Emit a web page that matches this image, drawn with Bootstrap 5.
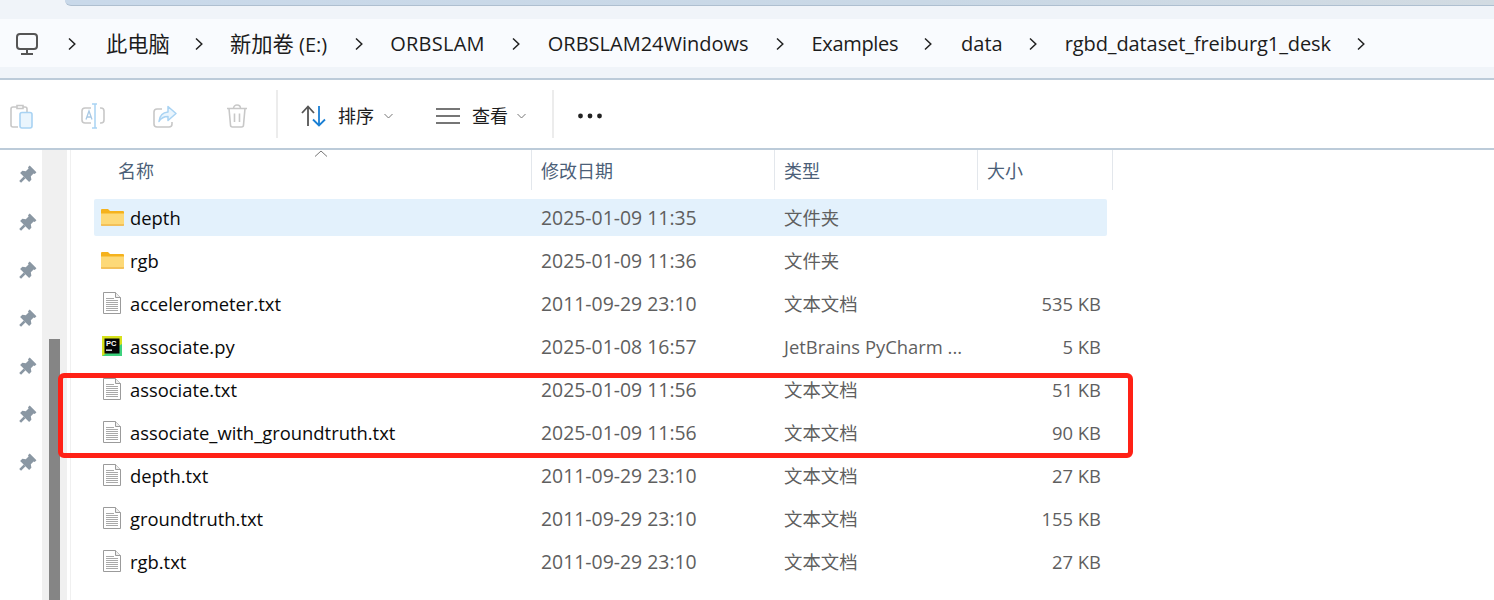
<!doctype html>
<html lang="zh-CN"><head><meta charset="utf-8"><title>rgbd_dataset_freiburg1_desk</title>
<link href="https://cdn.jsdelivr.net/npm/bootstrap@5.3.0/dist/css/bootstrap.min.css" rel="stylesheet">
<style>
html,body{height:600px;overflow:hidden;background:#fff}
body{font-family:"Open Sans","Noto Sans CJK SC",sans-serif;color:#1a1a1a;width:1494px}
.top-band{height:19px;background:#f0f4f9}
.top-strip{height:6px;margin-left:65px;background:linear-gradient(90deg,#c9d9ea,#c9d8e6 60%,#d2dbe2);border-bottom:1px solid #aebfd0;border-bottom-left-radius:6px}
.addr{height:48px;background:#f9fbfe;font-size:20px;color:#1c1c1c;padding-top:2px}
.addr-after{height:11px;background:#f0f4f9}
.rule{height:2px;background:#bccbd9}
.pc-ico{margin-left:15px;width:24px;height:24px}
.seg{white-space:nowrap}
.cjk-big{font-size:21.3px}
.chev{width:8px;height:14px;flex:none}
.tight{letter-spacing:-.35px}.wide{letter-spacing:.25px}.tight-sm{letter-spacing:-.1px}
.l9{margin-left:9px}.l10{margin-left:10px}.l12{margin-left:12px}.l23{margin-left:23px}.l25{margin-left:25px}.l26{margin-left:26px}.l27{margin-left:27px}.l28{margin-left:28px}.l29{margin-left:29px}.l30{margin-left:30px}.l43{margin-left:43px}.l48{margin-left:48px}.l49{margin-left:49px}
.tools{height:68px;padding-top:4px}
.tb-ico{flex:none;display:block}
.tb-sep{width:2px;height:48px;background:#ececec;flex:none;margin-top:-4px}
.tb-lbl{font-size:18px;color:#1c1c1c;white-space:nowrap}
.body-wrap{height:450px}
.pins{width:42px;padding-top:15px;gap:38px;flex:none}
.pin{width:18px;height:18px;margin-left:19px;margin-bottom:-8px}
.sb-track{width:25px;background:#f0f0f0;padding-left:7px;padding-top:189px;flex:none}
.sb-thumb{width:11px;height:261px;background:#858585}
.gut{width:4px;border-right:1px solid #f0f0f0;flex:none}
.files{padding-left:23px;width:1040px}
.hdr{height:40px;font-size:18px;color:#4c5f78;margin-right:-5px}
.hcell{padding-left:9px;height:40px;display:flex;align-items:center;border-right:1px solid #e3e7ec;flex:none;padding-top:2px}
.w1{width:438px;padding-left:24px}.w2{width:243px}.w3{width:203px}.w4{width:135px}
.caret-up{top:0;left:220px;width:14px;height:7px}
.rows{padding-top:9px;gap:6px}
.frow{height:37px;font-size:18.4px;border-radius:2px;white-space:nowrap;width:1013px}
.frow.sel{background:#e3f1fc}
.c1{width:437px;color:#0a0a0a;flex:none}
.ic-folder{margin-left:7px;margin-right:6px;flex:none}
.ic-doc{margin-left:9px;margin-right:9px;flex:none}
.ic-pc{margin-left:8px;margin-right:8px;flex:none}
.c2{width:243px;padding-left:10px;color:#5f5f5f;flex:none;font-size:19.4px}
.c3{width:203px;padding-left:10px;color:#5f5f5f;flex:none}
.c4{width:124px;text-align:right;color:#5f5f5f;flex:none}
.red-box{left:58px;top:373px;width:1075px;height:85px;border:5px solid #ff2116;border-radius:6px;pointer-events:none}
</style></head>
<body class="position-relative">
<svg width="0" height="0" class="position-absolute"><defs>
<symbol id="pin" viewBox="0 0 16 16"><path d="M9.500.500 15.500 6.500 14 8 13 7.500 10.500 10 11 13 9 15 1 7 3 5 6 5.500 8.500 3 8 2Z" fill="#8a97a3"/><path d="M5 11 1 15" stroke="#8a97a3" stroke-width="2.400"/></symbol>
<symbol id="chv" viewBox="0 0 8 14"><path d="M1 1.500 6.800 7 1 12.500" fill="none" stroke="#222" stroke-width="1.500"/></symbol>
<symbol id="folder" viewBox="0 0 23 18"><path d="M0 2a1 1 0 0 1 1-1h6l2 2h13a1 1 0 0 1 1 1v12.500a1 1 0 0 1-1 1H1a1 1 0 0 1-1-1Z" fill="#f5b21d"/><path d="M0 5.500h23v11a1 1 0 0 1-1 1H1a1 1 0 0 1-1-1Z" fill="#fdd978"/><path d="M0 16.500h23v1H0Z" fill="#eaa936"/></symbol>
<symbol id="doc" viewBox="0 0 18 22"><path d="M.5.500h12l5 5v16H.5Z" fill="#fff" stroke="#9b9b9b"/><path d="M12.500.500v5h5" fill="#eee" stroke="#9b9b9b"/><path d="M3 6.500h8M3 8.500h12M3 10.500h12M3 12.500h12M3 14.500h12M3 16.500h12M3 18.500h12" stroke="#a9a9a9"/></symbol>
</defs></svg>

<div class="top-band"><div class="top-strip"></div></div>
<div class="addr d-flex align-items-center">
  <svg class="pc-ico" viewBox="0 0 24 24" fill="none" stroke="#555" stroke-width="2"><rect x="2" y="2" width="20" height="15" rx="3"/><path d="M12 17v4M6 22h12" /></svg>
  <svg class="chev l29"><use href="#chv"/></svg>
  <span class="seg cjk-big l30">此电脑</span>
  <svg class="chev l25"><use href="#chv"/></svg>
  <span class="seg l27"><span class="cjk-big">新加卷</span> (E:)</span>
  <svg class="chev l28"><use href="#chv"/></svg>
  <span class="seg wide l27">ORBSLAM</span>
  <svg class="chev l27"><use href="#chv"/></svg>
  <span class="seg l28">ORBSLAM24Windows</span>
  <svg class="chev l27"><use href="#chv"/></svg>
  <span class="seg tight l28">Examples</span>
  <svg class="chev l26"><use href="#chv"/></svg>
  <span class="seg l29">data</span>
  <svg class="chev l26"><use href="#chv"/></svg>
  <span class="seg tight-sm l28">rgbd_dataset_freiburg1_desk</span>
  <svg class="chev l26"><use href="#chv"/></svg>
</div>
<div class="addr-after"></div>
<div class="rule"></div>

<div class="tools d-flex align-items-center">
  <svg class="tb-ico l10" width="23" height="25" viewBox="0 0 23 25" fill="none"><path d="M7 3H3a2 2 0 0 0-2 2v16a2 2 0 0 0 2 2h5" stroke="#c8c8c8" stroke-width="1.600"/><path d="M7 1.500h6v3H7zM13 3h2a2 2 0 0 1 2 2v3" stroke="#c8c8c8" stroke-width="1.600"/><rect x="10" y="8.500" width="12" height="15.500" rx="2" stroke="#a9d3f3" stroke-width="1.600" fill="#eaf5fd"/></svg>
  <svg class="tb-ico l48" width="24" height="26" viewBox="0 0 24 26" fill="none"><path d="M10 5H4a3 3 0 0 0-3 3v9a3 3 0 0 0 3 3h6M19 5h1a3 3 0 0 1 3 3v9a3 3 0 0 1-3 3h-1" stroke="#c8c8c8" stroke-width="1.600"/><path d="M11 1h5M11 25h5M14 1v24" stroke="#a9d3f3" stroke-width="1.500"/><path d="M5 16.500 8 8l3 8.500M6 14h4" stroke="#a9c9e4" stroke-width="1.300"/></svg>
  <svg class="tb-ico l48" width="24" height="23" viewBox="0 0 24 23" fill="none"><path d="M9 4H4a3 3 0 0 0-3 3v12a3 3 0 0 0 3 3h12a3 3 0 0 0 3-3v-2" stroke="#c8c8c8" stroke-width="1.600"/><path d="M15 1.500 23 8.500l-8 7v-4c-4 0-7 1.500-9 5 .5-5.500 3.500-9 9-9.500Z" fill="#eaf5fd" stroke="#a9d3f3" stroke-width="1.500" stroke-linejoin="round"/></svg>
  <svg class="tb-ico l49" width="22" height="24" viewBox="0 0 22 24" fill="none" stroke="#c8c8c8" stroke-width="1.600"><path d="M1 4.500h20M7.500 4.500C7.500 2.500 9 1 11 1s3.500 1.500 3.500 3.500M3 4.500l1.500 16.500a2 2 0 0 0 2 2h9a2 2 0 0 0 2-2L19 4.500M8.500 9.500v8.500M13.500 9.500v8.500"/></svg>
  <div class="tb-sep l28"></div>
  <svg class="tb-ico l23" width="25" height="22" viewBox="0 0 25 22" fill="none" stroke-width="1.800"><path d="M1 8 7 1.500 13 8M7 2v19" stroke="#555"/><path d="M12 14.500l6 6 6-6M18 20V1" stroke="#1a7fd4"/></svg>
  <span class="tb-lbl l12">排序</span>
  <svg class="tb-ico l10" width="9" height="6" viewBox="0 0 9 6" fill="none" stroke="#777"><path d="M.5 1 4.500 5 8.500 1"/></svg>
  <svg class="tb-ico l43" width="24" height="16" viewBox="0 0 24 16" stroke="#4a4a4a" stroke-width="1.300"><path d="M0 1h24M0 8h24M0 15h24"/></svg>
  <span class="tb-lbl l12">查看</span>
  <svg class="tb-ico l9" width="9" height="6" viewBox="0 0 9 6" fill="none" stroke="#777"><path d="M.5 1 4.500 5 8.500 1"/></svg>
  <div class="tb-sep l26"></div>
  <svg class="tb-ico l23" width="26" height="6" viewBox="0 0 26 6" fill="#222"><circle cx="3.500" cy="3" r="2.400"/><circle cx="13" cy="3" r="2.400"/><circle cx="22.500" cy="3" r="2.400"/></svg>
</div>
<div class="rule"></div>

<div class="body-wrap d-flex">
  <div class="pins d-flex flex-column">
    <svg class="pin"><use href="#pin"/></svg><svg class="pin"><use href="#pin"/></svg><svg class="pin"><use href="#pin"/></svg><svg class="pin"><use href="#pin"/></svg><svg class="pin"><use href="#pin"/></svg><svg class="pin"><use href="#pin"/></svg><svg class="pin"><use href="#pin"/></svg>
  </div>
  <div class="sb-track"><div class="sb-thumb"></div></div>
  <div class="gut"></div>
  <div class="files">
    <div class="hdr d-flex position-relative">
      <div class="hcell w1">名称</div><div class="hcell w2">修改日期</div><div class="hcell w3">类型</div><div class="hcell w4">大小</div>
      <svg class="caret-up position-absolute" viewBox="0 0 14 7" fill="none" stroke="#777"><path d="M1 6.500 7 1l6 5.500"/></svg>
    </div>
    <div class="rows d-flex flex-column">
      <div class="frow sel d-flex align-items-center"><div class="c1 d-flex align-items-center"><svg class="ic-folder" width="23" height="18"><use href="#folder"/></svg><span>depth</span></div><div class="c2">2025-01-09 11:35</div><div class="c3">文件夹</div><div class="c4"></div></div>
      <div class="frow d-flex align-items-center"><div class="c1 d-flex align-items-center"><svg class="ic-folder" width="23" height="18"><use href="#folder"/></svg><span>rgb</span></div><div class="c2">2025-01-09 11:36</div><div class="c3">文件夹</div><div class="c4"></div></div>
      <div class="frow d-flex align-items-center"><div class="c1 d-flex align-items-center"><svg class="ic-doc" width="18" height="22"><use href="#doc"/></svg><span>accelerometer.txt</span></div><div class="c2">2011-09-29 23:10</div><div class="c3">文本文档</div><div class="c4">535 KB</div></div>
      <div class="frow d-flex align-items-center"><div class="c1 d-flex align-items-center"><svg class="ic-pc" width="20" height="20" viewBox="0 0 20 20"><rect width="20" height="20" fill="#d7e21c"/><path d="M0 20 20 20 20 8Z" fill="#3ed27e"/><rect x="2.500" y="2.500" width="15" height="15" fill="#050505"/><text x="4" y="10" font-size="7.500" font-weight="700" fill="#fff" font-family="Liberation Sans, sans-serif">PC</text><rect x="4" y="13.500" width="6" height="1.300" fill="#fff"/></svg><span>associate.py</span></div><div class="c2">2025-01-08 16:57</div><div class="c3">JetBrains PyCharm ...</div><div class="c4">5 KB</div></div>
      <div class="frow d-flex align-items-center"><div class="c1 d-flex align-items-center"><svg class="ic-doc" width="18" height="22"><use href="#doc"/></svg><span>associate.txt</span></div><div class="c2">2025-01-09 11:56</div><div class="c3">文本文档</div><div class="c4">51 KB</div></div>
      <div class="frow d-flex align-items-center"><div class="c1 d-flex align-items-center"><svg class="ic-doc" width="18" height="22"><use href="#doc"/></svg><span>associate_with_groundtruth.txt</span></div><div class="c2">2025-01-09 11:56</div><div class="c3">文本文档</div><div class="c4">90 KB</div></div>
      <div class="frow d-flex align-items-center"><div class="c1 d-flex align-items-center"><svg class="ic-doc" width="18" height="22"><use href="#doc"/></svg><span>depth.txt</span></div><div class="c2">2011-09-29 23:10</div><div class="c3">文本文档</div><div class="c4">27 KB</div></div>
      <div class="frow d-flex align-items-center"><div class="c1 d-flex align-items-center"><svg class="ic-doc" width="18" height="22"><use href="#doc"/></svg><span>groundtruth.txt</span></div><div class="c2">2011-09-29 23:10</div><div class="c3">文本文档</div><div class="c4">155 KB</div></div>
      <div class="frow d-flex align-items-center"><div class="c1 d-flex align-items-center"><svg class="ic-doc" width="18" height="22"><use href="#doc"/></svg><span>rgb.txt</span></div><div class="c2">2011-09-29 23:10</div><div class="c3">文本文档</div><div class="c4">27 KB</div></div>
    </div>
  </div>
</div>
<div class="red-box position-absolute"></div>
<script src="https://cdn.jsdelivr.net/npm/bootstrap@5.3.0/dist/js/bootstrap.bundle.min.js"></script>
</body></html>
